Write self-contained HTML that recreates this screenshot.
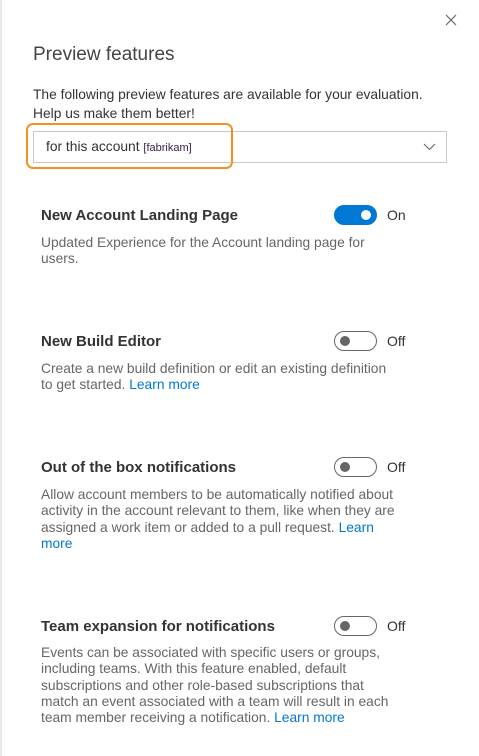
<!DOCTYPE html>
<html><head><meta charset="utf-8"><style>
*{margin:0;padding:0;box-sizing:border-box}
body{width:479px;height:756px;background:#fff;font-family:"Liberation Sans",sans-serif;position:relative;overflow:hidden;color:#333}
.lb{position:absolute;left:0;top:0;width:2px;height:756px;background:#e8e8e8}
.a{position:absolute;white-space:nowrap}
.t{font-size:15px;font-weight:bold;color:#333;left:41px}
.d{font-size:13.8px;color:#666;left:41px;line-height:16.3px;white-space:normal;width:350px}
.d a{color:#0078d4;text-decoration:none}
.tg{position:absolute;left:334px;width:43px;height:20px;border-radius:10px;border:1px solid #666}
.tg i{position:absolute;left:5px;top:4px;width:10px;height:10px;border-radius:50%;background:#666}
.tg.on{background:#0078d4;border-color:#0078d4}
.tg.on i{left:auto;right:5px;background:#fff}
.lab{position:absolute;left:387px;font-size:14px;color:#333}
</style></head><body>
<div class="lb"></div>
<svg class="a" style="left:445px;top:14px" width="12" height="12"><path d="M1 1L11 11M11 1L1 11" stroke="#666" stroke-width="1.2"/></svg>
<div class="a" style="left:33px;top:44px;font-size:19px;color:#444">Preview features</div>
<div class="a" style="left:33px;top:85px;font-size:13.8px;color:#333;line-height:19px">The following preview features are available for your evaluation.<br>Help us make them better!</div>
<div class="a" style="left:33px;top:131px;width:414px;height:32px;border:1px solid #c8c8c8"></div>
<div class="a" style="left:46px;top:139px;font-size:13.8px;color:#333">for this account <span style="font-size:11px;color:#3a1a4a">[fabrikam]</span></div>
<svg class="a" style="left:423px;top:143px" width="13" height="8"><path d="M1 1L6.5 6.5L12 1" stroke="#666" fill="none" stroke-width="1.1"/></svg>
<div class="a" style="left:26px;top:123px;width:207px;height:46px;border:2px solid #f7901e;border-radius:7px"></div>

<div class="a t" style="top:207px">New Account Landing Page</div>
<div class="tg on" style="top:205px"><i></i></div><div class="lab" style="top:207px">On</div>
<div class="a d" style="top:235px">Updated Experience for the Account landing page for users.</div>

<div class="a t" style="top:333px">New Build Editor</div>
<div class="tg" style="top:331px"><i></i></div><div class="lab" style="top:333px">Off</div>
<div class="a d" style="top:361px">Create a new build definition or edit an existing definition to get started. <a>Learn more</a></div>

<div class="a t" style="top:459px">Out of the box notifications</div>
<div class="tg" style="top:457px"><i></i></div><div class="lab" style="top:459px">Off</div>
<div class="a d" style="top:487px;width:370px">Allow account members to be automatically notified about activity in the account relevant to them, like when they are assigned a work item or added to a pull request. <a>Learn<br>more</a></div>

<div class="a t" style="top:618px">Team expansion for notifications</div>
<div class="tg" style="top:616px"><i></i></div><div class="lab" style="top:618px">Off</div>
<div class="a d" style="top:645px">Events can be associated with specific users or groups, including teams. With this feature enabled, default subscriptions and other role-based subscriptions that match an event associated with a team will result in each team member receiving a notification. <a>Learn more</a></div>
</body></html>
